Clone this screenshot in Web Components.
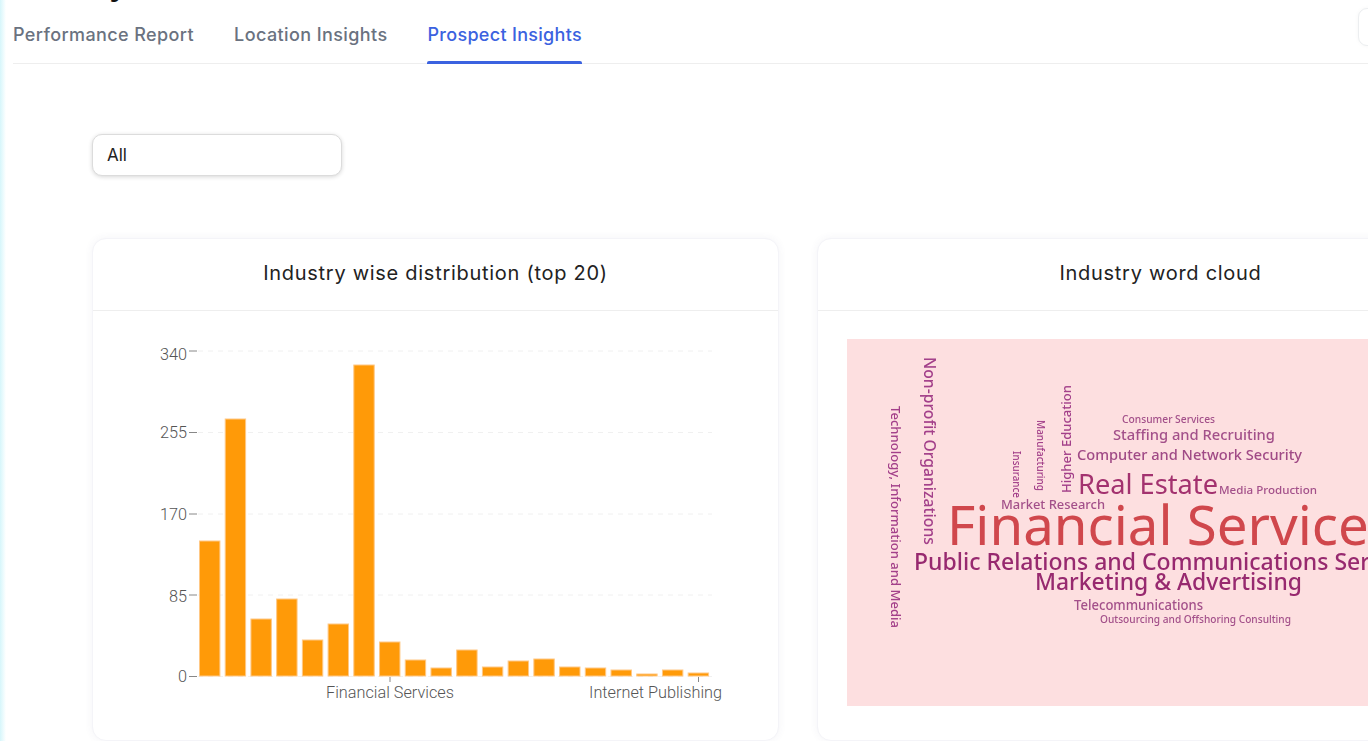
<!DOCTYPE html>
<html>
<head>
<meta charset="utf-8">
<title>Prospect Insights</title>
<style>
    html, body { margin: 0; height: 741px; overflow: hidden; background: #fff; }
    body { font-family: 'Inter', 'Liberation Sans', sans-serif; }
</style>
</head>
<body>
<insights-page>
    <page-tabs slot="tabs">
        <tab-item>Performance Report</tab-item>
        <tab-item>Location Insights</tab-item>
        <tab-item active>Prospect Insights</tab-item>
    </page-tabs>
    <filter-select slot="filter" value="All"></filter-select>
    <chart-card heading="Industry wise distribution (top 20)"><bar-chart></bar-chart></chart-card>
    <chart-card heading="Industry word cloud"><word-cloud></word-cloud></chart-card>
</insights-page>

<script>
customElements.define('insights-page',
    class extends HTMLElement {
        constructor() {
            super();
            this.attachShadow({mode: 'open'}).innerHTML = `
    <style>
    :host{
        display: flex;
        width: 1510px;
        height: 741px;
    }
    .edge{
        flex: none;
        width: 6px;
        background: linear-gradient(90deg, #d6f6fb, #ffffff);
    }
    .main{
        flex: 1;
        min-width: 0;
        padding-left: 7px;
    }
    /* the page is scrolled a little, only the tail of the title is left */
    .title{
        margin-top: -32px;
        height: 37px;
        font-family: 'Inter', sans-serif;
        font-weight: 700;
        font-size: 28px;
        line-height: 36px;
        color: #111;
    }
    .content{
        padding: 70px 0 0 79px;
    }
    .cards{
        display: flex;
        gap: 38px;
        margin-top: 62px;
    }
    </style>
    <div class="edge"></div>
    <div class="main">
        <div class="title">Monthly</div>
        <slot name="tabs"></slot>
        <div class="content">
            <slot name="filter"></slot>
            <div class="cards"><slot></slot></div>
        </div>
    </div>`;
        }
    }
);

customElements.define('page-tabs',
    class extends HTMLElement {
        constructor() {
            super();
            this.attachShadow({mode: 'open'}).innerHTML = `
    <style>
    :host{
        display: flex;
        justify-content: space-between;
        height: 58px;
        border-bottom: 1px solid #eeeeee;
    }
    .tabs{
        display: flex;
        gap: 40px;
    }
    .action{
        flex: none;
        box-sizing: border-box;
        width: 139px;
        height: 38px;
        margin: 3px 13px 0 0;
        background: #fff;
        border: 1px solid #eceef0;
        border-radius: 9px;
        box-shadow: 0 0 4px rgba(0,0,0,.04);
    }
    </style>
    <div class="tabs"><slot></slot></div>
    <div class="action"></div>`;
        }
    }
);

customElements.define('tab-item',
    class extends HTMLElement {
        constructor() {
            super();
            this.attachShadow({mode: 'open'}).innerHTML = `
    <style>
    :host{
        display: block;
        position: relative;
        height: 58px;
        font-family: 'Inter', sans-serif;
        font-weight: 500;
        font-size: 18px;
        line-height: 60px;
        letter-spacing: .4px;
        color: #6a7280;
        white-space: nowrap;
    }
    :host([active]){
        color: #3b62e0;
        letter-spacing: .3px;
    }
    :host([active])::after{
        content: '';
        position: absolute;
        left: 0;
        right: 0;
        bottom: -1px;
        height: 3px;
        border-radius: 2px 2px 0 0;
        background: #3b62e0;
    }
    </style>
    <slot></slot>`;
        }
    }
);

customElements.define('filter-select',
    class extends HTMLElement {
        constructor() {
            super();
            this.attachShadow({mode: 'open'}).innerHTML = `
    <style>
    :host{
        display: flex;
        align-items: center;
        box-sizing: border-box;
        width: 250px;
        height: 42px;
        padding: 0 14px;
        background: #fff;
        border: 1px solid #dcdcdc;
        border-radius: 10px;
        box-shadow: 0 1px 4px rgba(0,0,0,.16);
        font-family: 'Inter', sans-serif;
        font-size: 17px;
        color: #222;
    }
    </style>
    <span></span>`;
            this.shadowRoot.querySelector('span').textContent = this.getAttribute('value');
        }
    }
);

customElements.define('chart-card',
    class extends HTMLElement {
        constructor() {
            super();
            this.attachShadow({mode: 'open'}).innerHTML = `
    <style>
    :host{
        display: block;
        flex: none;
        box-sizing: border-box;
        width: 687px;
        height: 503px;
        background: #fff;
        border: 1px solid #f4f4f8;
        border-radius: 14px;
        box-shadow: 0 0 8px rgba(60,60,120,.06);
        overflow: hidden;
    }
    .head{
        height: 71px;
        border-bottom: 1px solid #eeeeee;
        font-family: 'Inter', sans-serif;
        font-weight: 430;
        font-size: 20px;
        line-height: 69px;
        letter-spacing: .72px;
        text-align: center;
        color: #222;
    }
    </style>
    <div class="head"></div>
    <slot></slot>`;
            this.shadowRoot.querySelector('.head').textContent = this.getAttribute('heading');
        }
    }
);

customElements.define('bar-chart',
    class extends HTMLElement {
        constructor() {
            super();
            // bar tops in page pixels read from the picture, baseline is 676
            const tops = [541,419,619,599,640,624,365,642,660,668,650,667,661,659,667,668,670,674,670,673];
            const bars = tops.map((top, i) => {
                const x = 107.5 + i * 25.72;
                return `<rect x="${x}" y="${top - 311}" width="20.4" height="${676 - top}" fill="#ff9a08" stroke="#ffc885" stroke-width="1"/>`;
            }).join('');
            // label, y of the tick, y of the middle of the label
            const ticks = [[340, 351, 354], [255, 432.5, 432], [170, 514, 514], [85, 595, 596], [0, 676.5, 676]].map(([label, y, mid]) => {
                const py = y - 311;
                return `
                <line x1="106" x2="620" y1="${py}" y2="${py}" stroke="#f0f0f0" stroke-dasharray="5 5"/>
                <line x1="97" x2="105" y1="${py}" y2="${py}" stroke="#888"/>
                <text x="95" y="${mid - 311 + 5.5}" text-anchor="end">${label}</text>`;
            }).join('');
            this.attachShadow({mode: 'open'}).innerHTML = `
    <style>
    :host{
        display: block;
        height: 431px;
    }
    svg{
        display: block;
    }
    text{
        font-family: 'Roboto', sans-serif;
        font-weight: 300;
        font-size: 16.25px;
        fill: #555;
    }
    </style>
    <svg width="685" height="431" viewBox="1 0 685 431">
        ${ticks}
        ${bars}
        <line x1="298" x2="298" y1="366" y2="371" stroke="#888"/>
        <line x1="606.5" x2="606.5" y1="366" y2="371" stroke="#888"/>
        <text x="298" y="386.5" text-anchor="middle">Financial Services</text>
        <text x="630" y="386.5" text-anchor="end">Internet Publishing</text>
    </svg>`;
        }
    }
);

customElements.define('word-cloud',
    class extends HTMLElement {
        constructor() {
            super();
            // text, left, baseline, length, size, colour, weight; positions are relative to the picture at 847,339
            const flat = [
                ['Consumer Services', 275, 84, 93, 10, '#a3508a', 500],
                ['Staffing and Recruiting', 266, 101, 162, 14, '#a3508a', 500],
                ['Computer and Network Security', 230, 121, 225, 14, '#a04a86', 500],
                ['Real Estate', 231, 155, 140, 27, '#a3326f', 400],
                ['Media Production', 372, 155, 98, 11.5, '#a3508a', 500],
                ['Market Research', 154, 170, 104, 13, '#a3508a', 500],
                ['Financial Services', 100, 206, 448, 54, '#d0474c', 400],
                ['Public Relations and Communications Services', 67, 231, 510, 23.5, '#97296f', 500],
                ['Marketing & Advertising', 188, 251, 267, 24, '#97296f', 500],
                ['Telecommunications', 227, 271, 129, 14, '#a3508a', 500],
                ['Outsourcing and Offshoring Consulting', 253, 284, 191, 10.5, '#a3508a', 500]
            ];
            // text, x of the baseline, y of the start, length, size, angle
            const turned = [
                ['Non-profit Organizations', 77, 18, 188, 15.5, 90],
                ['Technology, Information and Media', 44, 67, 222, 13, 90],
                ['Manufacturing', 190, 81, 71, 10, 90],
                ['Insurance', 166, 112, 47, 10, 90],
                ['Higher Education', 224, 154, 108, 13, -90]
            ];
            const words = flat.map(([t, x, y, len, size, colour, weight]) =>
                `<text x="${x}" y="${y}" textLength="${len}" lengthAdjust="spacingAndGlyphs" font-size="${size}" font-weight="${weight}" fill="${colour}">${t.replace('&', '&amp;')}</text>`
            ).concat(turned.map(([t, x, y, len, size, angle]) =>
                `<text transform="translate(${x} ${y}) rotate(${angle})" textLength="${len}" lengthAdjust="spacingAndGlyphs" font-size="${size}" font-weight="500" fill="#a3408a">${t}</text>`
            )).join('');
            this.attachShadow({mode: 'open'}).innerHTML = `
    <style>
    :host{
        display: block;
        width: 627px;
        height: 367px;
        margin: 28px 0 0 29px;
        background: #fddfe0;
    }
    svg{
        display: block;
    }
    text{
        font-family: 'Noto Sans', 'DejaVu Sans', sans-serif;
        filter: blur(.25px);
    }
    </style>
    <svg width="627" height="367">${words}</svg>`;
        }
    }
);
</script>
</body>
</html>
